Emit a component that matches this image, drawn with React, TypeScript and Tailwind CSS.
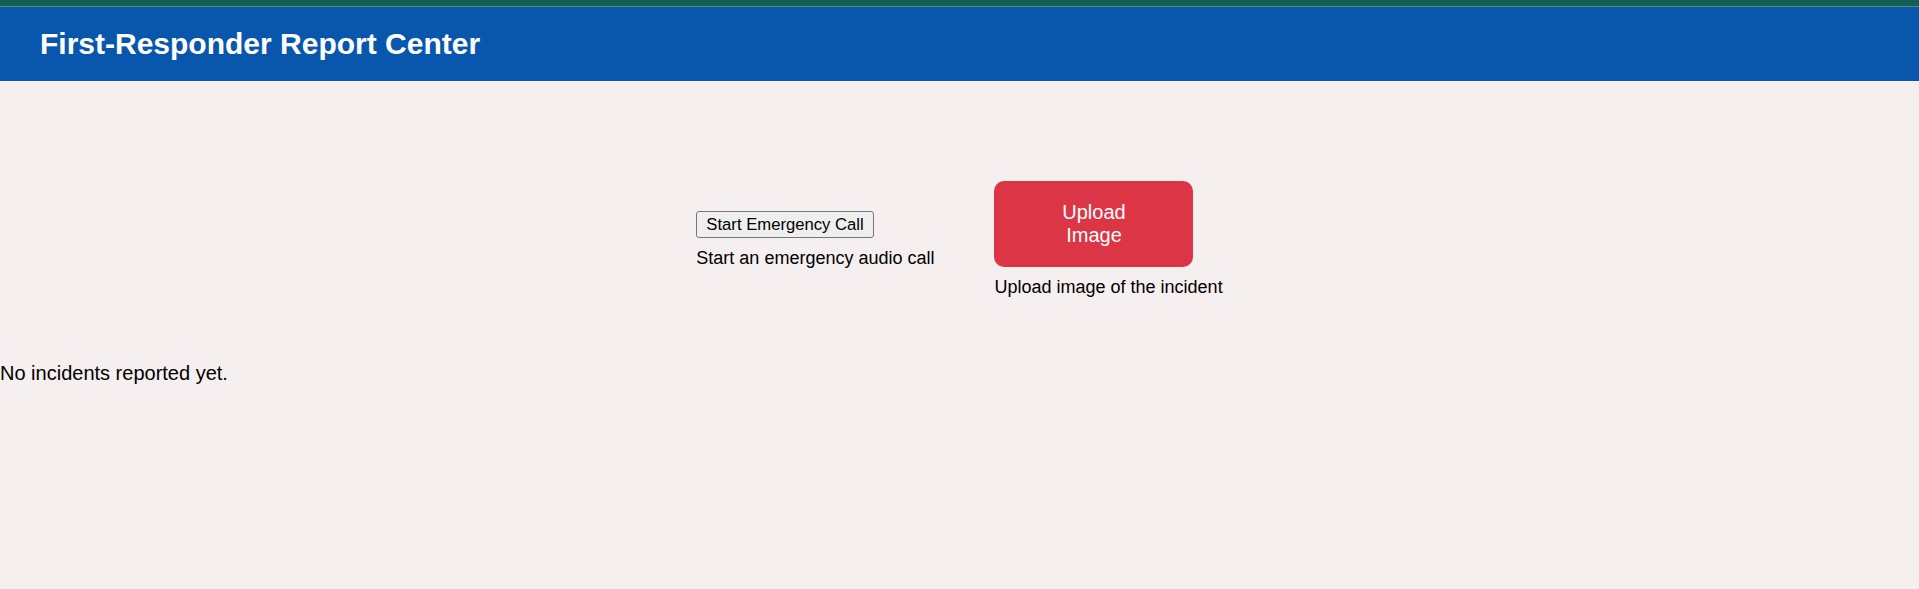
export default function App() {
  return (
    <div className="min-h-[589px] bg-[#f5efef] font-['Liberation_Sans',Arial,sans-serif] text-black">
      {/* top strip */}
      <div className="h-[6px] bg-[#155e54]" />
      <div className="h-[1px] bg-[#4d8f80]" />

      {/* Header */}
      <header className="bg-[#0957ad] px-[40px] py-[20px]">
        <h1 className="text-[30px] leading-[34px] font-bold text-white">First-Responder Report Center</h1>
      </header>

      {/* Actions */}
      <main className="pt-[100px]">
        <div className="flex items-center justify-center gap-[60px]">
          <div className="flex flex-col items-start">
            <button className="rounded-[3px] border border-[#767676] bg-[#efefef] px-[9px] py-[3px] text-[16.67px] leading-[19px]">
              Start Emergency Call
            </button>
            <p className="mt-[10px] text-[18px] leading-[21px]">Start an emergency audio call</p>
          </div>
          <div className="flex flex-col items-start">
            <button className="w-[199px] rounded-[10px] bg-[#dc3545] px-[40px] py-[20px] text-[20px] leading-[23px] text-white">
              Upload Image
            </button>
            <p className="mt-[10px] text-[18px] leading-[21px]">Upload image of the incident</p>
          </div>
        </div>

        <p className="mt-[64px] text-[20px] leading-[23px]">No incidents reported yet.</p>
      </main>
    </div>
  );
}
